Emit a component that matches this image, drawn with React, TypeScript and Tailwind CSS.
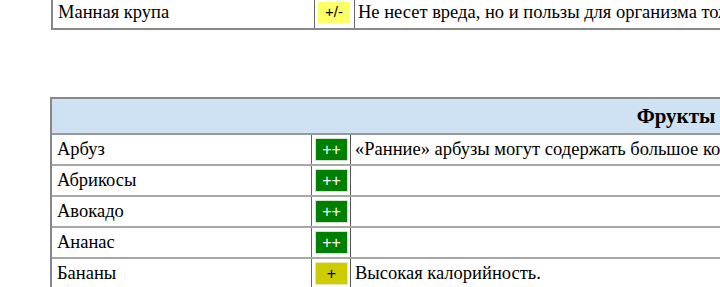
const fruits = [
  { name: "Арбуз", mark: "++", note: "«Ранние» арбузы могут содержать большое количество нитратов и пестицидов." },
  { name: "Абрикосы", mark: "++", note: "" },
  { name: "Авокадо", mark: "++", note: "" },
  { name: "Ананас", mark: "++", note: "" },
  { name: "Бананы", mark: "+", note: "Высокая калорийность." },
];

function Badge({ mark }: { mark: string }) {
  const color =
    mark === "++"
      ? "bg-[#008000] text-white border-[#cfe3cf]"
      : "bg-[#cccc00] text-black border-[#e8e8b0]";
  return (
    <div className={`${color} w-[33px] h-[23px] flex items-center justify-center text-[16px] leading-none border font-['Liberation_Sans']`}>
      {mark}
    </div>
  );
}

export default function App() {
  return (
    <div className="w-[720px] h-[287px] overflow-hidden bg-white text-black text-[18.5px] font-['Liberation_Serif']">
      {/* Cereals table tail */}
      <div className="ml-[51px] mt-[-3px] w-[1300px] flex border-l-2 border-b-2 border-[#888]">
        <div className="w-[262px] h-[31px] flex items-center pl-[5px] border-r border-[#666]">Манная крупа</div>
        <div className="w-[40px] flex items-center pl-[3px] border-r border-[#666]">
          <div className="bg-[#ffff66] w-[32px] h-[21px] flex items-center justify-center text-[15px] font-['Liberation_Sans']">+/-</div>
        </div>
        <div className="flex-1 flex items-center pl-[3px] whitespace-nowrap">
          Не несет вреда, но и пользы для организма тоже не приносит.
        </div>
      </div>

      {/* Fruits table */}
      <div className="ml-[50px] mt-[67px] w-[1250px] border-l-2 border-t-2 border-[#888]">
        <div className="h-[36px] bg-[#cfe2f3] border-b-2 border-[#999] flex items-center justify-center pt-[2px] font-bold text-[21px]">
          Фрукты
        </div>
        {fruits.map((f) => (
          <div key={f.name} className="flex h-[31px] border-b-2 border-[#a8a8a8]">
            <div className="w-[260px] flex items-center pl-[5px] border-r border-[#666]">{f.name}</div>
            <div className="w-[39px] flex items-center pl-[3px] border-r border-[#555]">
              <Badge mark={f.mark} />
            </div>
            <div className="flex-1 flex items-center pl-[4px] whitespace-nowrap">{f.note}</div>
          </div>
        ))}
      </div>
    </div>
  );
}
